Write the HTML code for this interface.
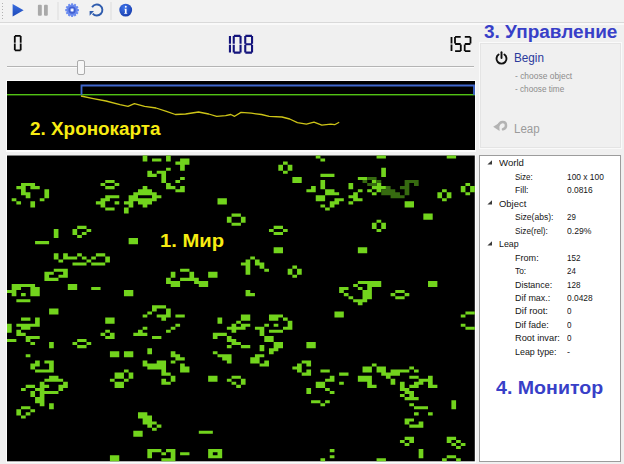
<!DOCTYPE html>
<html><head><meta charset="utf-8">
<style>
html,body{margin:0;padding:0;}
body{width:624px;height:464px;overflow:hidden;background:#f0f0f0;font-family:"Liberation Sans",sans-serif;position:relative;}
.abs{position:absolute;}
#toolbar{left:0;top:0;width:624px;height:22px;background:#f2f2f2;border-bottom:1px solid #d9d9d9;}
#tbline{left:0;top:23px;width:624px;height:2px;background:#f9f9f9;}
#chrono{left:7px;top:80.7px;width:468px;height:69.7px;background:#000;}
#world{left:7px;top:155px;width:468px;height:307px;overflow:hidden;}
#ctrl{left:479px;top:42px;width:143px;height:107px;border:1px solid #fafafa;box-shadow:0 0 0 1px #e4e4e4 inset;box-sizing:border-box;}
#mon{left:479px;top:155px;width:142px;height:307px;border:1px solid #9c9c9c;background:#fff;box-sizing:border-box;}
.t{position:absolute;white-space:nowrap;line-height:1;}
.h{font-weight:bold;color:#383fc8;font-size:17.5px;}
.y{font-weight:bold;color:#f7ec12;font-size:17.5px;}
.m{font-size:9.2px;color:#151515;}
</style></head><body>
<div id="toolbar" class="abs"></div><div id="tbline" class="abs"></div>
<!-- toolbar icons -->
<svg class="abs" style="left:0;top:0" width="140" height="23" viewBox="0 0 140 23">
  <g fill="#b2b2b2"><rect x="2" y="3" width="1" height="1"/><rect x="2" y="6" width="1" height="1"/><rect x="2" y="9" width="1" height="1"/><rect x="2" y="12" width="1" height="1"/><rect x="2" y="15" width="1" height="1"/><rect x="2" y="18" width="1" height="1"/></g>
  <defs><linearGradient id="gp" x1="0" y1="0" x2="0" y2="1"><stop offset="0" stop-color="#3a6ee0"/><stop offset="1" stop-color="#1c48b8"/></linearGradient>
  <radialGradient id="gi" cx="0.4" cy="0.3" r="0.8"><stop offset="0" stop-color="#3f74ea"/><stop offset="1" stop-color="#1438a8"/></radialGradient></defs>
  <path d="M12.6 3.9L23.6 10.2L12.6 16.6z" fill="url(#gp)"/>
  <rect x="37.9" y="4.7" width="3.9" height="11" rx="1" fill="#a9a9a9"/><rect x="44" y="4.7" width="3.8" height="11" rx="1" fill="#a9a9a9"/>
  <rect x="57.5" y="2" width="1" height="18" fill="#dcdcdc"/>
  <!-- gear -->
  <g transform="translate(72.1 10.1)">
    <g fill="#6f8ff0"><rect x="-1.05" y="-6.9" width="2.1" height="13.8" rx="0.5" transform="rotate(0)"/><rect x="-1.05" y="-6.9" width="2.1" height="13.8" rx="0.5" transform="rotate(30)"/><rect x="-1.05" y="-6.9" width="2.1" height="13.8" rx="0.5" transform="rotate(60)"/><rect x="-1.05" y="-6.9" width="2.1" height="13.8" rx="0.5" transform="rotate(90)"/><rect x="-1.05" y="-6.9" width="2.1" height="13.8" rx="0.5" transform="rotate(120)"/><rect x="-1.05" y="-6.9" width="2.1" height="13.8" rx="0.5" transform="rotate(150)"/></g>
    <circle r="5.7" fill="#6a8aee"/>
    <circle r="3.6" fill="#4260d0"/><circle r="2.0" fill="#9fb2f2"/><circle r="1.2" fill="#ffffff"/>
  </g>
  <!-- refresh -->
  <g transform="translate(96.9 10)">
    <path d="M-4.8 -2.7A5.5 5.5 0 1 1 -4.2 3.6" fill="none" stroke="#2f5cae" stroke-width="1.9"/>
    <path d="M-7.3 1.0L-2.9 1.0L-7.3 5.8z" fill="#2f5cae"/>
  </g>
  <rect x="110.5" y="2" width="1" height="18" fill="#dcdcdc"/>
  <!-- info -->
  <circle cx="125.7" cy="10.1" r="6.4" fill="url(#gi)"/>
  <circle cx="125.8" cy="6.7" r="0.95" fill="#fff"/><path d="M124.6 8.7h2v4.3h0.6v0.8h-3v-0.8h0.7v-3.5h-0.5z" fill="#fff"/>
</svg>
<!-- numbers -->
<svg class="abs" style="left:0;top:0" width="480" height="60" viewBox="0 0 480 60">
 <path d="M14.89 35.00h5.72v1.80h-5.72zM19.80 35.99h1.80v6.76h-1.80zM19.80 43.55h1.80v6.76h-1.80zM14.89 49.50h5.72v1.80h-5.72zM13.90 43.55h1.80v6.76h-1.80zM13.90 35.99h1.80v6.76h-1.80z" fill="#0a0a0a"/><path d="M228.90 44.71h2.10v7.83h-2.10zM228.90 35.95h2.10v7.83h-2.10zM233.86 34.80h6.59v2.10h-6.59zM239.50 35.95h2.10v7.83h-2.10zM239.50 44.71h2.10v7.83h-2.10zM233.86 51.60h6.59v2.10h-6.59zM232.70 44.71h2.10v7.83h-2.10zM232.70 35.95h2.10v7.83h-2.10zM245.36 34.80h6.59v2.10h-6.59zM251.00 35.95h2.10v7.83h-2.10zM251.00 44.71h2.10v7.83h-2.10zM245.36 51.60h6.59v2.10h-6.59zM244.20 44.71h2.10v7.83h-2.10zM244.20 35.95h2.10v7.83h-2.10zM245.36 43.20h6.59v2.10h-6.59z" fill="#14147c"/><path d="M450.60 44.40h1.80v6.61h-1.80zM450.60 36.99h1.80v6.61h-1.80zM455.09 36.00h5.62v1.80h-5.62zM454.10 36.99h1.80v6.61h-1.80zM455.09 43.10h5.62v1.80h-5.62zM459.90 44.40h1.80v6.61h-1.80zM455.09 50.20h5.62v1.80h-5.62zM464.79 36.00h5.62v1.80h-5.62zM469.60 36.99h1.80v6.61h-1.80zM464.79 43.10h5.62v1.80h-5.62zM463.80 44.40h1.80v6.61h-1.80zM464.79 50.20h5.62v1.80h-5.62z" fill="#0a0a0a"/>
</svg>
<!-- slider -->
<div class="abs" style="left:7px;top:66px;width:467px;height:1px;background:#b4b4b4;"></div>
<div class="abs" style="left:7px;top:67px;width:467px;height:1px;background:#fbfbfb;"></div>
<div class="abs" style="left:76.5px;top:60.4px;width:8.4px;height:14.4px;background:#f7f7f7;border:1px solid #ababab;border-radius:2px;box-sizing:border-box;"></div>
<div class="abs" style="left:6px;top:80px;width:470px;height:71.5px;background:#fcfcfc;"></div><div class="abs" style="left:6px;top:154.5px;width:470px;height:308px;background:#fcfcfc;"></div>
<div id="chrono" class="abs"><svg width="468" height="69" viewBox="0 0 468 69" style="position:absolute;left:0;top:0">
 <rect x="0" y="13" width="468" height="1.4" fill="#52c214"/>
 <path d="M74.5 14V4.5H467V14" fill="none" stroke="#3f66cc" stroke-width="1.8"/>
 <polyline points="74.0,15.0 86.3,17.6 99.0,20.0 113.0,23.7 121.0,25.3 127.4,22.7 137.6,25.3 149.0,27.0 159.4,30.4 168.4,33.5 178.6,33.0 191.5,31.0 201.7,33.0 209.7,35.3 218.6,34.7 223.8,33.5 227.6,35.3 234.0,31.4 244.3,32.2 254.5,33.5 262.2,35.3 275.0,36.0 282.7,38.0 290.4,41.7 299.4,43.2 307.0,41.2 314.8,44.2 323.8,43.2 327.6,43.7 332.2,41.2" fill="none" stroke="#cdc417" stroke-width="1.3" stroke-linejoin="round"/>
</svg></div>
<div id="world" class="abs"><svg width="468" height="307" viewBox="0 0 468 307" style="position:absolute;left:0;top:0"><rect x="0" y="0.5" width="467.8" height="305.8" fill="#000"/><path fill="#72d41d" d="M135.66 0.50h4.68v3.06h-4.68zM159.05 0.50h4.68v3.06h-4.68zM308.75 0.50h4.68v3.06h-4.68zM369.56 0.50h9.36v3.06h-9.36zM439.73 0.50h9.36v3.06h-9.36zM135.66 3.56h4.68v3.06h-4.68zM145.02 3.56h9.36v3.06h-9.36zM159.05 3.56h4.68v3.06h-4.68zM173.09 3.56h9.36v3.06h-9.36zM313.43 3.56h4.68v3.06h-4.68zM168.41 6.62h14.03v3.06h-14.03zM276.00 6.62h4.68v3.06h-4.68zM173.09 9.67h4.68v3.06h-4.68zM271.32 9.67h4.68v3.06h-4.68zM280.68 9.67h4.68v3.06h-4.68zM159.05 12.73h4.68v3.06h-4.68zM173.09 12.73h4.68v3.06h-4.68zM271.32 12.73h4.68v3.06h-4.68zM280.68 12.73h4.68v3.06h-4.68zM374.24 12.73h4.68v3.06h-4.68zM140.34 15.79h4.68v3.06h-4.68zM149.70 15.79h9.36v3.06h-9.36zM276.00 15.79h4.68v3.06h-4.68zM374.24 15.79h4.68v3.06h-4.68zM140.34 18.85h9.36v3.06h-9.36zM154.37 18.85h4.68v3.06h-4.68zM313.43 18.85h14.03v3.06h-14.03zM374.24 18.85h4.68v3.06h-4.68zM154.37 21.91h4.68v3.06h-4.68zM173.09 21.91h4.68v3.06h-4.68zM285.36 21.91h9.36v3.06h-9.36zM350.85 21.91h9.36v3.06h-9.36zM98.24 24.96h9.36v3.06h-9.36zM154.37 24.96h4.68v3.06h-4.68zM168.41 24.96h4.68v3.06h-4.68zM285.36 24.96h9.36v3.06h-9.36zM313.43 24.96h4.68v3.06h-4.68zM364.88 24.96h4.68v3.06h-4.68zM14.03 28.02h14.03v3.06h-14.03zM93.56 28.02h4.68v3.06h-4.68zM107.59 28.02h4.68v3.06h-4.68zM159.05 28.02h4.68v3.06h-4.68zM313.43 28.02h4.68v3.06h-4.68zM341.49 28.02h4.68v3.06h-4.68zM369.56 28.02h4.68v3.06h-4.68zM458.44 28.02h4.68v3.06h-4.68zM9.36 31.08h9.36v3.06h-9.36zM23.39 31.08h9.36v3.06h-9.36zM98.24 31.08h9.36v3.06h-9.36zM135.66 31.08h4.68v3.06h-4.68zM159.05 31.08h9.36v3.06h-9.36zM173.09 31.08h4.68v3.06h-4.68zM304.07 31.08h4.68v3.06h-4.68zM313.43 31.08h4.68v3.06h-4.68zM341.49 31.08h4.68v3.06h-4.68zM364.88 31.08h14.03v3.06h-14.03zM453.77 31.08h4.68v3.06h-4.68zM463.12 31.08h4.68v3.06h-4.68zM14.03 34.14h4.68v3.06h-4.68zM37.42 34.14h4.68v3.06h-4.68zM130.98 34.14h14.03v3.06h-14.03zM168.41 34.14h9.36v3.06h-9.36zM299.39 34.14h9.36v3.06h-9.36zM318.10 34.14h9.36v3.06h-9.36zM350.85 34.14h4.68v3.06h-4.68zM360.21 34.14h4.68v3.06h-4.68zM369.56 34.14h4.68v3.06h-4.68zM435.05 34.14h4.68v3.06h-4.68zM453.77 34.14h4.68v3.06h-4.68zM463.12 34.14h4.68v3.06h-4.68zM14.03 37.20h9.36v3.06h-9.36zM37.42 37.20h4.68v3.06h-4.68zM126.31 37.20h23.39v3.06h-23.39zM318.10 37.20h14.03v3.06h-14.03zM346.17 37.20h4.68v3.06h-4.68zM364.88 37.20h4.68v3.06h-4.68zM430.38 37.20h4.68v3.06h-4.68zM439.73 37.20h4.68v3.06h-4.68zM458.44 37.20h4.68v3.06h-4.68zM18.71 40.25h4.68v3.06h-4.68zM37.42 40.25h4.68v3.06h-4.68zM98.24 40.25h14.03v3.06h-14.03zM121.63 40.25h9.36v3.06h-9.36zM145.02 40.25h9.36v3.06h-9.36zM308.75 40.25h9.36v3.06h-9.36zM341.49 40.25h9.36v3.06h-9.36zM430.38 40.25h4.68v3.06h-4.68zM439.73 40.25h4.68v3.06h-4.68zM4.68 43.31h4.68v3.06h-4.68zM32.75 43.31h4.68v3.06h-4.68zM93.56 43.31h9.36v3.06h-9.36zM121.63 43.31h28.07v3.06h-28.07zM210.51 43.31h9.36v3.06h-9.36zM308.75 43.31h9.36v3.06h-9.36zM327.46 43.31h9.36v3.06h-9.36zM346.17 43.31h9.36v3.06h-9.36zM435.05 43.31h4.68v3.06h-4.68zM9.36 46.37h4.68v3.06h-4.68zM23.39 46.37h4.68v3.06h-4.68zM88.88 46.37h9.36v3.06h-9.36zM107.59 46.37h4.68v3.06h-4.68zM116.95 46.37h9.36v3.06h-9.36zM130.98 46.37h14.03v3.06h-14.03zM210.51 46.37h9.36v3.06h-9.36zM322.78 46.37h9.36v3.06h-9.36zM341.49 46.37h4.68v3.06h-4.68zM397.63 46.37h9.36v3.06h-9.36zM23.39 49.43h4.68v3.06h-4.68zM93.56 49.43h4.68v3.06h-4.68zM121.63 49.43h4.68v3.06h-4.68zM135.66 49.43h4.68v3.06h-4.68zM313.43 49.43h4.68v3.06h-4.68zM322.78 49.43h4.68v3.06h-4.68zM397.63 49.43h9.36v3.06h-9.36zM98.24 52.49h9.36v3.06h-9.36zM116.95 52.49h4.68v3.06h-4.68zM318.10 52.49h4.68v3.06h-4.68zM116.95 55.54h4.68v3.06h-4.68zM224.54 58.60h9.36v3.06h-9.36zM416.34 58.60h9.36v3.06h-9.36zM219.87 61.66h4.68v3.06h-4.68zM233.90 61.66h4.68v3.06h-4.68zM416.34 61.66h9.36v3.06h-9.36zM219.87 64.72h4.68v3.06h-4.68zM233.90 64.72h4.68v3.06h-4.68zM369.56 64.72h4.68v3.06h-4.68zM224.54 67.78h9.36v3.06h-9.36zM364.88 67.78h4.68v3.06h-4.68zM374.24 67.78h4.68v3.06h-4.68zM70.17 70.83h9.36v3.06h-9.36zM266.65 70.83h9.36v3.06h-9.36zM364.88 70.83h4.68v3.06h-4.68zM374.24 70.83h4.68v3.06h-4.68zM46.78 73.89h4.68v3.06h-4.68zM65.49 73.89h4.68v3.06h-4.68zM79.53 73.89h4.68v3.06h-4.68zM261.97 73.89h4.68v3.06h-4.68zM276.00 73.89h4.68v3.06h-4.68zM369.56 73.89h4.68v3.06h-4.68zM46.78 76.95h4.68v3.06h-4.68zM65.49 76.95h4.68v3.06h-4.68zM74.85 76.95h4.68v3.06h-4.68zM266.65 76.95h9.36v3.06h-9.36zM46.78 80.01h4.68v3.06h-4.68zM70.17 80.01h4.68v3.06h-4.68zM121.63 83.07h9.36v3.06h-9.36zM28.07 86.12h14.03v3.06h-14.03zM121.63 86.12h9.36v3.06h-9.36zM266.65 92.24h9.36v3.06h-9.36zM350.85 92.24h9.36v3.06h-9.36zM266.65 95.30h9.36v3.06h-9.36zM350.85 95.30h9.36v3.06h-9.36zM46.78 98.36h4.68v3.06h-4.68zM56.14 98.36h4.68v3.06h-4.68zM70.17 98.36h4.68v3.06h-4.68zM88.88 98.36h9.36v3.06h-9.36zM46.78 101.41h4.68v3.06h-4.68zM56.14 101.41h14.03v3.06h-14.03zM74.85 101.41h4.68v3.06h-4.68zM84.20 101.41h4.68v3.06h-4.68zM98.24 101.41h4.68v3.06h-4.68zM243.26 101.41h4.68v3.06h-4.68zM51.46 104.47h4.68v3.06h-4.68zM79.53 104.47h4.68v3.06h-4.68zM98.24 104.47h4.68v3.06h-4.68zM238.58 104.47h4.68v3.06h-4.68zM247.93 104.47h4.68v3.06h-4.68zM65.49 107.53h14.03v3.06h-14.03zM84.20 107.53h14.03v3.06h-14.03zM233.90 107.53h9.36v3.06h-9.36zM247.93 107.53h9.36v3.06h-9.36zM238.58 110.59h4.68v3.06h-4.68zM252.61 110.59h4.68v3.06h-4.68zM285.36 110.59h4.68v3.06h-4.68zM46.78 113.65h14.03v3.06h-14.03zM173.09 113.65h9.36v3.06h-9.36zM238.58 113.65h4.68v3.06h-4.68zM257.29 113.65h4.68v3.06h-4.68zM280.68 113.65h4.68v3.06h-4.68zM290.04 113.65h4.68v3.06h-4.68zM37.42 116.70h9.36v3.06h-9.36zM56.14 116.70h4.68v3.06h-4.68zM163.73 116.70h4.68v3.06h-4.68zM182.44 116.70h4.68v3.06h-4.68zM201.15 116.70h9.36v3.06h-9.36zM238.58 116.70h4.68v3.06h-4.68zM280.68 116.70h4.68v3.06h-4.68zM290.04 116.70h4.68v3.06h-4.68zM37.42 119.76h4.68v3.06h-4.68zM51.46 119.76h9.36v3.06h-9.36zM163.73 119.76h4.68v3.06h-4.68zM182.44 119.76h4.68v3.06h-4.68zM201.15 119.76h9.36v3.06h-9.36zM285.36 119.76h4.68v3.06h-4.68zM37.42 122.82h14.03v3.06h-14.03zM159.05 122.82h4.68v3.06h-4.68zM173.09 122.82h18.71v3.06h-18.71zM159.05 125.88h14.03v3.06h-14.03zM187.12 125.88h14.03v3.06h-14.03zM350.85 125.88h23.39v3.06h-23.39zM421.02 125.88h9.36v3.06h-9.36zM4.68 128.94h23.39v3.06h-23.39zM60.81 128.94h9.36v3.06h-9.36zM163.73 128.94h9.36v3.06h-9.36zM191.80 128.94h9.36v3.06h-9.36zM346.17 128.94h4.68v3.06h-4.68zM360.21 128.94h14.03v3.06h-14.03zM421.02 128.94h9.36v3.06h-9.36zM4.68 131.99h9.36v3.06h-9.36zM23.39 131.99h9.36v3.06h-9.36zM60.81 131.99h9.36v3.06h-9.36zM84.20 131.99h9.36v3.06h-9.36zM332.14 131.99h9.36v3.06h-9.36zM350.85 131.99h4.68v3.06h-4.68zM360.21 131.99h4.68v3.06h-4.68zM0.00 135.05h9.36v3.06h-9.36zM23.39 135.05h9.36v3.06h-9.36zM116.95 135.05h9.36v3.06h-9.36zM238.58 135.05h4.68v3.06h-4.68zM332.14 135.05h4.68v3.06h-4.68zM355.53 135.05h9.36v3.06h-9.36zM388.27 135.05h9.36v3.06h-9.36zM4.68 138.11h4.68v3.06h-4.68zM14.03 138.11h4.68v3.06h-4.68zM23.39 138.11h9.36v3.06h-9.36zM116.95 138.11h9.36v3.06h-9.36zM238.58 138.11h9.36v3.06h-9.36zM336.82 138.11h4.68v3.06h-4.68zM355.53 138.11h9.36v3.06h-9.36zM383.60 138.11h4.68v3.06h-4.68zM397.63 138.11h4.68v3.06h-4.68zM341.49 141.17h4.68v3.06h-4.68zM355.53 141.17h9.36v3.06h-9.36zM388.27 141.17h9.36v3.06h-9.36zM9.36 144.23h14.03v3.06h-14.03zM346.17 144.23h14.03v3.06h-14.03zM350.85 147.28h4.68v3.06h-4.68zM145.02 150.34h14.03v3.06h-14.03zM42.10 153.40h9.36v3.06h-9.36zM145.02 153.40h4.68v3.06h-4.68zM159.05 153.40h4.68v3.06h-4.68zM42.10 156.46h9.36v3.06h-9.36zM140.34 156.46h4.68v3.06h-4.68zM159.05 156.46h4.68v3.06h-4.68zM327.46 156.46h9.36v3.06h-9.36zM458.44 156.46h9.36v3.06h-9.36zM135.66 159.52h4.68v3.06h-4.68zM149.70 159.52h14.03v3.06h-14.03zM168.41 159.52h9.36v3.06h-9.36zM233.90 159.52h9.36v3.06h-9.36zM261.97 159.52h14.03v3.06h-14.03zM327.46 159.52h9.36v3.06h-9.36zM453.77 159.52h4.68v3.06h-4.68zM14.03 162.57h9.36v3.06h-9.36zM28.07 162.57h4.68v3.06h-4.68zM98.24 162.57h9.36v3.06h-9.36zM154.37 162.57h4.68v3.06h-4.68zM210.51 162.57h4.68v3.06h-4.68zM233.90 162.57h9.36v3.06h-9.36zM261.97 162.57h9.36v3.06h-9.36zM276.00 162.57h4.68v3.06h-4.68zM28.07 165.63h4.68v3.06h-4.68zM98.24 165.63h9.36v3.06h-9.36zM210.51 165.63h4.68v3.06h-4.68zM229.22 165.63h4.68v3.06h-4.68zM280.68 165.63h4.68v3.06h-4.68zM0.00 168.69h4.68v3.06h-4.68zM9.36 168.69h23.39v3.06h-23.39zM168.41 168.69h4.68v3.06h-4.68zM224.54 168.69h4.68v3.06h-4.68zM233.90 168.69h9.36v3.06h-9.36zM257.29 168.69h4.68v3.06h-4.68zM266.65 168.69h4.68v3.06h-4.68zM280.68 168.69h4.68v3.06h-4.68zM453.77 168.69h4.68v3.06h-4.68zM0.00 171.75h4.68v3.06h-4.68zM14.03 171.75h9.36v3.06h-9.36zM135.66 171.75h4.68v3.06h-4.68zM163.73 171.75h4.68v3.06h-4.68zM219.87 171.75h18.71v3.06h-18.71zM247.93 171.75h9.36v3.06h-9.36zM276.00 171.75h9.36v3.06h-9.36zM458.44 171.75h9.36v3.06h-9.36zM0.00 174.81h4.68v3.06h-4.68zM9.36 174.81h4.68v3.06h-4.68zM98.24 174.81h4.68v3.06h-4.68zM130.98 174.81h4.68v3.06h-4.68zM159.05 174.81h4.68v3.06h-4.68zM224.54 174.81h4.68v3.06h-4.68zM252.61 174.81h4.68v3.06h-4.68zM261.97 174.81h14.03v3.06h-14.03zM9.36 177.86h9.36v3.06h-9.36zM93.56 177.86h4.68v3.06h-4.68zM102.92 177.86h4.68v3.06h-4.68zM126.31 177.86h14.03v3.06h-14.03zM205.83 177.86h14.03v3.06h-14.03zM252.61 177.86h4.68v3.06h-4.68zM18.71 180.92h14.03v3.06h-14.03zM98.24 180.92h9.36v3.06h-9.36zM145.02 180.92h9.36v3.06h-9.36zM205.83 180.92h4.68v3.06h-4.68zM219.87 180.92h4.68v3.06h-4.68zM257.29 180.92h9.36v3.06h-9.36zM0.00 183.98h9.36v3.06h-9.36zM18.71 183.98h4.68v3.06h-4.68zM70.17 183.98h9.36v3.06h-9.36zM219.87 183.98h9.36v3.06h-9.36zM257.29 183.98h9.36v3.06h-9.36zM23.39 187.04h4.68v3.06h-4.68zM42.10 187.04h4.68v3.06h-4.68zM65.49 187.04h4.68v3.06h-4.68zM79.53 187.04h4.68v3.06h-4.68zM224.54 187.04h9.36v3.06h-9.36zM266.65 187.04h9.36v3.06h-9.36zM299.39 187.04h9.36v3.06h-9.36zM42.10 190.10h4.68v3.06h-4.68zM70.17 190.10h9.36v3.06h-9.36zM219.87 190.10h4.68v3.06h-4.68zM233.90 190.10h9.36v3.06h-9.36zM252.61 190.10h4.68v3.06h-4.68zM266.65 190.10h9.36v3.06h-9.36zM299.39 190.10h9.36v3.06h-9.36zM140.34 193.15h4.68v3.06h-4.68zM252.61 193.15h4.68v3.06h-4.68zM261.97 193.15h9.36v3.06h-9.36zM102.92 196.21h9.36v3.06h-9.36zM116.95 196.21h9.36v3.06h-9.36zM140.34 196.21h4.68v3.06h-4.68zM163.73 196.21h4.68v3.06h-4.68zM205.83 196.21h4.68v3.06h-4.68zM261.97 196.21h4.68v3.06h-4.68zM18.71 199.27h4.68v3.06h-4.68zM102.92 199.27h9.36v3.06h-9.36zM116.95 199.27h9.36v3.06h-9.36zM163.73 199.27h9.36v3.06h-9.36zM210.51 199.27h14.03v3.06h-14.03zM247.93 199.27h9.36v3.06h-9.36zM168.41 202.33h9.36v3.06h-9.36zM215.19 202.33h9.36v3.06h-9.36zM243.26 202.33h9.36v3.06h-9.36zM28.07 205.39h4.68v3.06h-4.68zM37.42 205.39h9.36v3.06h-9.36zM135.66 205.39h4.68v3.06h-4.68zM149.70 205.39h9.36v3.06h-9.36zM163.73 205.39h4.68v3.06h-4.68zM219.87 205.39h4.68v3.06h-4.68zM243.26 205.39h9.36v3.06h-9.36zM257.29 205.39h4.68v3.06h-4.68zM294.71 205.39h9.36v3.06h-9.36zM23.39 208.44h9.36v3.06h-9.36zM42.10 208.44h4.68v3.06h-4.68zM135.66 208.44h23.39v3.06h-23.39zM173.09 208.44h4.68v3.06h-4.68zM252.61 208.44h9.36v3.06h-9.36zM290.04 208.44h4.68v3.06h-4.68zM299.39 208.44h4.68v3.06h-4.68zM364.88 208.44h4.68v3.06h-4.68zM23.39 211.50h4.68v3.06h-4.68zM42.10 211.50h4.68v3.06h-4.68zM140.34 211.50h18.71v3.06h-18.71zM173.09 211.50h9.36v3.06h-9.36zM285.36 211.50h9.36v3.06h-9.36zM355.53 211.50h9.36v3.06h-9.36zM369.56 211.50h9.36v3.06h-9.36zM402.31 211.50h4.68v3.06h-4.68zM28.07 214.56h18.71v3.06h-18.71zM116.95 214.56h4.68v3.06h-4.68zM154.37 214.56h4.68v3.06h-4.68zM173.09 214.56h9.36v3.06h-9.36zM290.04 214.56h4.68v3.06h-4.68zM299.39 214.56h4.68v3.06h-4.68zM313.43 214.56h9.36v3.06h-9.36zM355.53 214.56h9.36v3.06h-9.36zM369.56 214.56h9.36v3.06h-9.36zM383.60 214.56h18.71v3.06h-18.71zM406.99 214.56h4.68v3.06h-4.68zM107.59 217.62h9.36v3.06h-9.36zM121.63 217.62h4.68v3.06h-4.68zM154.37 217.62h9.36v3.06h-9.36zM294.71 217.62h9.36v3.06h-9.36zM332.14 217.62h9.36v3.06h-9.36zM374.24 217.62h18.71v3.06h-18.71zM42.10 220.68h9.36v3.06h-9.36zM107.59 220.68h9.36v3.06h-9.36zM121.63 220.68h4.68v3.06h-4.68zM163.73 220.68h4.68v3.06h-4.68zM201.15 220.68h9.36v3.06h-9.36zM224.54 220.68h9.36v3.06h-9.36zM322.78 220.68h4.68v3.06h-4.68zM350.85 220.68h14.03v3.06h-14.03zM378.92 220.68h4.68v3.06h-4.68zM402.31 220.68h9.36v3.06h-9.36zM421.02 220.68h4.68v3.06h-4.68zM37.42 223.73h18.71v3.06h-18.71zM102.92 223.73h4.68v3.06h-4.68zM116.95 223.73h4.68v3.06h-4.68zM154.37 223.73h4.68v3.06h-4.68zM163.73 223.73h4.68v3.06h-4.68zM201.15 223.73h9.36v3.06h-9.36zM219.87 223.73h4.68v3.06h-4.68zM233.90 223.73h4.68v3.06h-4.68zM318.10 223.73h9.36v3.06h-9.36zM350.85 223.73h14.03v3.06h-14.03zM383.60 223.73h4.68v3.06h-4.68zM411.66 223.73h14.03v3.06h-14.03zM32.75 226.79h4.68v3.06h-4.68zM56.14 226.79h4.68v3.06h-4.68zM107.59 226.79h9.36v3.06h-9.36zM154.37 226.79h9.36v3.06h-9.36zM224.54 226.79h4.68v3.06h-4.68zM233.90 226.79h4.68v3.06h-4.68zM308.75 226.79h9.36v3.06h-9.36zM332.14 226.79h4.68v3.06h-4.68zM360.21 226.79h4.68v3.06h-4.68zM383.60 226.79h4.68v3.06h-4.68zM392.95 226.79h4.68v3.06h-4.68zM406.99 226.79h9.36v3.06h-9.36zM421.02 226.79h4.68v3.06h-4.68zM18.71 229.85h9.36v3.06h-9.36zM32.75 229.85h9.36v3.06h-9.36zM51.46 229.85h9.36v3.06h-9.36zM107.59 229.85h9.36v3.06h-9.36zM229.22 229.85h4.68v3.06h-4.68zM308.75 229.85h9.36v3.06h-9.36zM360.21 229.85h9.36v3.06h-9.36zM392.95 229.85h4.68v3.06h-4.68zM402.31 229.85h9.36v3.06h-9.36zM421.02 229.85h9.36v3.06h-9.36zM14.03 232.91h4.68v3.06h-4.68zM28.07 232.91h9.36v3.06h-9.36zM51.46 232.91h4.68v3.06h-4.68zM299.39 232.91h4.68v3.06h-4.68zM318.10 232.91h4.68v3.06h-4.68zM392.95 232.91h9.36v3.06h-9.36zM23.39 235.97h4.68v3.06h-4.68zM32.75 235.97h18.71v3.06h-18.71zM299.39 235.97h4.68v3.06h-4.68zM322.78 235.97h4.68v3.06h-4.68zM397.63 235.97h9.36v3.06h-9.36zM23.39 239.02h4.68v3.06h-4.68zM32.75 239.02h4.68v3.06h-4.68zM392.95 239.02h4.68v3.06h-4.68zM402.31 239.02h4.68v3.06h-4.68zM28.07 242.08h9.36v3.06h-9.36zM397.63 242.08h14.03v3.06h-14.03zM28.07 245.14h9.36v3.06h-9.36zM304.07 245.14h9.36v3.06h-9.36zM318.10 245.14h4.68v3.06h-4.68zM444.41 245.14h4.68v3.06h-4.68zM32.75 248.20h4.68v3.06h-4.68zM42.10 248.20h4.68v3.06h-4.68zM313.43 248.20h4.68v3.06h-4.68zM402.31 248.20h4.68v3.06h-4.68zM444.41 248.20h4.68v3.06h-4.68zM14.03 251.26h9.36v3.06h-9.36zM42.10 251.26h4.68v3.06h-4.68zM406.99 251.26h14.03v3.06h-14.03zM444.41 251.26h4.68v3.06h-4.68zM9.36 254.31h4.68v3.06h-4.68zM23.39 254.31h4.68v3.06h-4.68zM9.36 257.37h4.68v3.06h-4.68zM18.71 257.37h4.68v3.06h-4.68zM130.98 257.37h9.36v3.06h-9.36zM406.99 257.37h4.68v3.06h-4.68zM421.02 257.37h4.68v3.06h-4.68zM14.03 260.43h4.68v3.06h-4.68zM130.98 260.43h14.03v3.06h-14.03zM135.66 263.49h9.36v3.06h-9.36zM397.63 263.49h9.36v3.06h-9.36zM135.66 266.55h14.03v3.06h-14.03zM397.63 266.55h4.68v3.06h-4.68zM411.66 266.55h4.68v3.06h-4.68zM140.34 269.60h4.68v3.06h-4.68zM149.70 269.60h4.68v3.06h-4.68zM402.31 269.60h14.03v3.06h-14.03zM145.02 272.66h4.68v3.06h-4.68zM126.31 275.72h9.36v3.06h-9.36zM191.80 275.72h14.03v3.06h-14.03zM126.31 278.78h9.36v3.06h-9.36zM397.63 281.84h9.36v3.06h-9.36zM439.73 281.84h9.36v3.06h-9.36zM392.95 284.89h4.68v3.06h-4.68zM402.31 284.89h4.68v3.06h-4.68zM439.73 284.89h4.68v3.06h-4.68zM449.09 284.89h4.68v3.06h-4.68zM397.63 287.95h4.68v3.06h-4.68zM444.41 287.95h4.68v3.06h-4.68zM453.77 287.95h4.68v3.06h-4.68zM449.09 291.01h4.68v3.06h-4.68zM140.34 294.07h14.03v3.06h-14.03zM159.05 294.07h9.36v3.06h-9.36zM201.15 294.07h14.03v3.06h-14.03zM322.78 294.07h4.68v3.06h-4.68zM411.66 294.07h4.68v3.06h-4.68zM140.34 297.13h4.68v3.06h-4.68zM154.37 297.13h4.68v3.06h-4.68zM163.73 297.13h4.68v3.06h-4.68zM173.09 297.13h9.36v3.06h-9.36zM201.15 297.13h4.68v3.06h-4.68zM210.51 297.13h4.68v3.06h-4.68zM411.66 297.13h4.68v3.06h-4.68zM102.92 300.18h9.36v3.06h-9.36zM140.34 300.18h4.68v3.06h-4.68zM163.73 300.18h4.68v3.06h-4.68zM201.15 300.18h14.03v3.06h-14.03zM322.78 300.18h4.68v3.06h-4.68zM411.66 300.18h4.68v3.06h-4.68zM439.73 300.18h9.36v3.06h-9.36zM102.92 303.24h9.36v3.06h-9.36zM154.37 303.24h14.03v3.06h-14.03zM313.43 303.24h4.68v3.06h-4.68zM369.56 303.24h9.36v3.06h-9.36zM435.05 303.24h4.68v3.06h-4.68zM449.09 303.24h4.68v3.06h-4.68z"/><path fill="#366a10" d="M360.21 21.91h9.36v3.06h-9.36zM355.53 24.96h4.68v3.06h-4.68zM369.56 24.96h4.68v3.06h-4.68zM397.63 24.96h14.03v3.06h-14.03zM360.21 28.02h9.36v3.06h-9.36zM397.63 28.02h4.68v3.06h-4.68zM406.99 28.02h4.68v3.06h-4.68zM378.92 31.08h4.68v3.06h-4.68zM392.95 31.08h9.36v3.06h-9.36zM374.24 34.14h14.03v3.06h-14.03zM397.63 34.14h4.68v3.06h-4.68zM374.24 37.20h18.71v3.06h-18.71zM397.63 37.20h4.68v3.06h-4.68zM383.60 40.25h14.03v3.06h-14.03z"/></svg></div>
<div id="ctrl" class="abs"></div>
<div id="mon" class="abs"></div>
<div class="t m" style="transform-origin:0 0;transform:scaleX(1.0450);left:498.5px;top:159.4px">World</div>
<svg class="abs" style="left:486.5px;top:160.0px" width="6" height="6"><path d="M5 0.3V4.6H0.4z" fill="#3a3a3a"/></svg>
<div class="t m" style="transform-origin:0 0;transform:scaleX(0.8709);left:514.7px;top:172.8px">Size:</div>
<div class="t m" style="transform-origin:0 0;transform:scaleX(0.9118);left:567.3px;top:172.8px">100 x 100</div>
<div class="t m" style="transform-origin:0 0;transform:scaleX(0.9443);left:514.7px;top:186.3px">Fill:</div>
<div class="t m" style="transform-origin:0 0;transform:scaleX(0.9107);left:567.3px;top:186.3px">0.0816</div>
<div class="t m" style="transform-origin:0 0;transform:scaleX(1.0278);left:498.5px;top:199.8px">Object</div>
<svg class="abs" style="left:486.5px;top:200.3px" width="6" height="6"><path d="M5 0.3V4.6H0.4z" fill="#3a3a3a"/></svg>
<div class="t m" style="transform-origin:0 0;transform:scaleX(0.9284);left:514.7px;top:213.2px">Size(abs):</div>
<div class="t m" style="transform-origin:0 0;transform:scaleX(0.8598);left:567.3px;top:213.2px">29</div>
<div class="t m" style="transform-origin:0 0;transform:scaleX(0.8949);left:514.7px;top:226.7px">Size(rel):</div>
<div class="t m" style="transform-origin:0 0;transform:scaleX(0.9362);left:567.3px;top:226.7px">0.29%</div>
<div class="t m" style="transform-origin:0 0;transform:scaleX(0.9632);left:498.5px;top:240.1px">Leap</div>
<svg class="abs" style="left:486.5px;top:240.7px" width="6" height="6"><path d="M5 0.3V4.6H0.4z" fill="#3a3a3a"/></svg>
<div class="t m" style="transform-origin:0 0;transform:scaleX(0.9875);left:514.7px;top:253.5px">From:</div>
<div class="t m" style="transform-origin:0 0;transform:scaleX(0.8798);left:567.3px;top:253.5px">152</div>
<div class="t m" style="transform-origin:0 0;transform:scaleX(0.9050);left:514.7px;top:267.0px">To:</div>
<div class="t m" style="transform-origin:0 0;transform:scaleX(0.8598);left:567.3px;top:267.0px">24</div>
<div class="t m" style="transform-origin:0 0;transform:scaleX(0.9710);left:514.7px;top:280.5px">Distance:</div>
<div class="t m" style="transform-origin:0 0;transform:scaleX(0.8798);left:567.3px;top:280.5px">128</div>
<div class="t m" style="transform-origin:0 0;transform:scaleX(0.9738);left:514.7px;top:293.9px">Dif max.:</div>
<div class="t m" style="transform-origin:0 0;transform:scaleX(0.9107);left:567.3px;top:293.9px">0.0428</div>
<div class="t m" style="transform-origin:0 0;transform:scaleX(1.0257);left:514.7px;top:307.4px">Dif root:</div>
<div class="t m" style="transform-origin:0 0;transform:scaleX(0.8780);left:567.3px;top:307.4px">0</div>
<div class="t m" style="transform-origin:0 0;transform:scaleX(0.9848);left:514.7px;top:320.8px">Dif fade:</div>
<div class="t m" style="transform-origin:0 0;transform:scaleX(0.8780);left:567.3px;top:320.8px">0</div>
<div class="t m" style="transform-origin:0 0;transform:scaleX(1.0082);left:514.7px;top:334.2px">Root invar:</div>
<div class="t m" style="transform-origin:0 0;transform:scaleX(0.8780);left:567.3px;top:334.2px">0</div>
<div class="t m" style="transform-origin:0 0;transform:scaleX(0.9669);left:514.7px;top:347.7px">Leap type:</div>
<div class="t m" style="transform-origin:0 0;transform:scaleX(0.9796);left:567.3px;top:347.7px">-</div>
<!-- control contents -->
<svg class="abs" style="left:494px;top:50.6px" width="15" height="15" viewBox="0 0 15 15"><path d="M4.6 3.6A5 5 0 1 0 10.4 3.6" fill="none" stroke="#111" stroke-width="1.9" stroke-linecap="round"/><path d="M7.5 1.2V7" stroke="#111" stroke-width="1.9" stroke-linecap="round"/></svg>
<div class="t" style="transform-origin:0 0;transform:scaleX(0.9771);left:514px;top:51.9px;font-size:12px;color:#2a3a9c;">Begin</div>
<div class="t" style="transform-origin:0 0;transform:scaleX(0.9370);left:514.8px;top:71.8px;font-size:9px;color:#8c8c8c;">- choose object</div>
<div class="t" style="transform-origin:0 0;transform:scaleX(0.9106);left:514.8px;top:84.6px;font-size:9px;color:#8c8c8c;">- choose time</div>
<svg class="abs" style="left:493px;top:120px" width="15" height="12" viewBox="0 0 15 12"><path d="M0.2 6.8L6.2 3.0L6.6 10.9z" fill="#b3b3b3"/><path d="M5.6 5.2C6.8 1.2 12.6 0.6 13.0 5.0C13.2 7.4 11.8 8.8 10.0 9.3" fill="none" stroke="#b3b3b3" stroke-width="2.5" stroke-linecap="round"/></svg>
<div class="t" style="transform-origin:0 0;transform:scaleX(0.9587);left:514px;top:122.6px;font-size:12px;color:#9b9b9b;">Leap</div>
<div class="t h" style="transform-origin:0 0;transform:scaleX(1.0855);left:483.8px;top:24px;">3. Управление</div>
<div class="t h" style="transform-origin:0 0;transform:scaleX(1.1192);left:495.6px;top:380.2px;">4. Монитор</div>
<div class="t y" style="transform-origin:0 0;transform:scaleX(1.0791);left:29.6px;top:121.2px;">2. Хронокарта</div>
<div class="t y" style="transform-origin:0 0;transform:scaleX(1.1553);left:160.1px;top:233px;">1. Мир</div>
</body></html>
